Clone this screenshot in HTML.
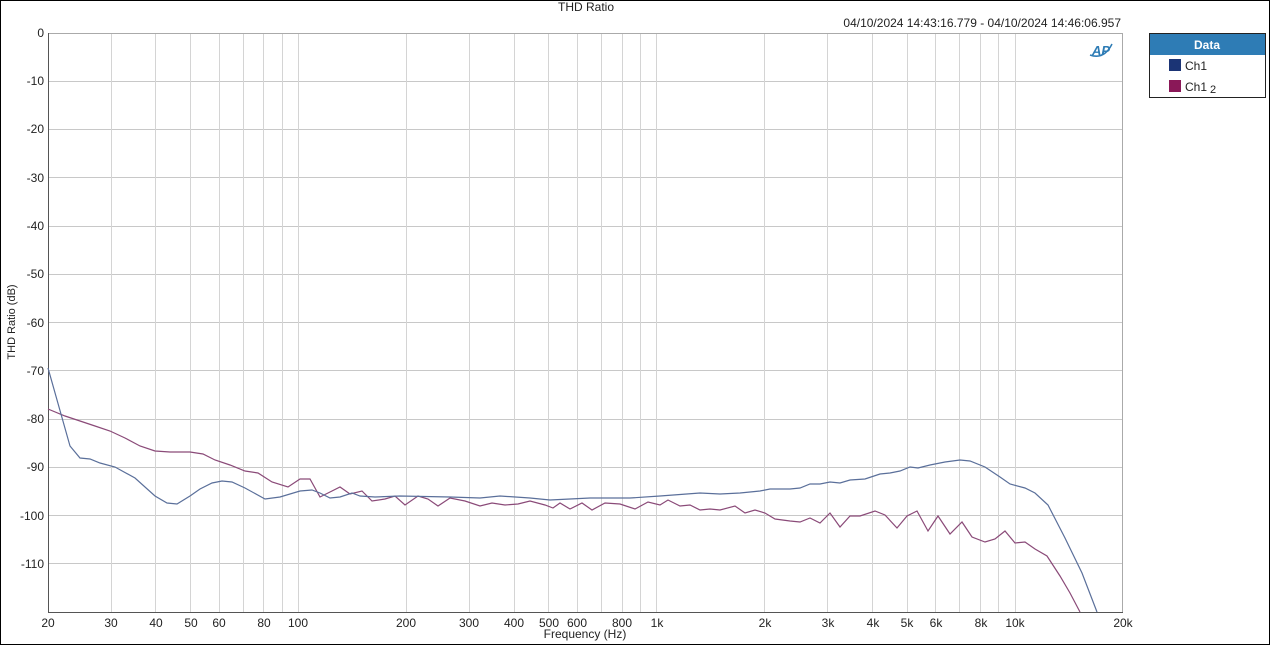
<!DOCTYPE html><html><head><style>body{margin:0;width:1270px;height:645px;overflow:hidden;background:#fff}text{font-family:"Liberation Sans",sans-serif;fill:#222}</style></head><body>
<svg width="1270" height="645" xmlns="http://www.w3.org/2000/svg">
<rect x="0.5" y="0.5" width="1269" height="644" fill="#fff" stroke="#000"/>
<text x="586" y="11" font-size="12" text-anchor="middle">THD Ratio</text>
<text x="1121" y="27" font-size="12" text-anchor="end">04/10/2024 14:43:16.779 - 04/10/2024 14:46:06.957</text>
<g id="grid" stroke="#d4d4d4" stroke-width="1">
<path d="M48.5 81.5H1123M48.5 129.5H1123M48.5 177.5H1123M48.5 226.5H1123M48.5 274.5H1123M48.5 322.5H1123M48.5 370.5H1123M48.5 419.5H1123M48.5 467.5H1123M48.5 515.5H1123M48.5 563.5H1123" stroke="#c8c8c8"/>
<path d="M111.5 33V612M155.5 33V612M190.5 33V612M219.5 33V612M243.5 33V612M263.5 33V612M282.5 33V612M298.5 33V612M406.5 33V612M469.5 33V612M514.5 33V612M548.5 33V612M577.5 33V612M601.5 33V612M622.5 33V612M640.5 33V612M656.5 33V612M764.5 33V612M827.5 33V612M872.5 33V612M907.5 33V612M935.5 33V612M959.5 33V612M980.5 33V612M998.5 33V612M1015.5 33V612"/>
</g>
<path d="M48.5 33.5H1122.5V612" fill="none" stroke="#aaa"/>
<path d="M48.5 33V612.5H1123" fill="none" stroke="#555"/>
<g font-size="12" text-anchor="end">
<text x="44" y="37">0</text><text x="44" y="85">-10</text><text x="44" y="133">-20</text><text x="44" y="182">-30</text><text x="44" y="230">-40</text><text x="44" y="278">-50</text><text x="44" y="327">-60</text><text x="44" y="375">-70</text><text x="44" y="423">-80</text><text x="44" y="471">-90</text><text x="44" y="520">-100</text><text x="44" y="568">-110</text>
</g>
<g font-size="12" text-anchor="middle">
<text x="48" y="627">20</text><text x="111" y="627">30</text><text x="156" y="627">40</text><text x="191" y="627">50</text><text x="219" y="627">60</text><text x="264" y="627">80</text><text x="298" y="627">100</text><text x="406" y="627">200</text><text x="469" y="627">300</text><text x="514" y="627">400</text><text x="549" y="627">500</text><text x="577" y="627">600</text><text x="622" y="627">800</text><text x="657" y="627">1k</text><text x="765" y="627">2k</text><text x="828" y="627">3k</text><text x="873" y="627">4k</text><text x="907" y="627">5k</text><text x="936" y="627">6k</text><text x="981" y="627">8k</text><text x="1015" y="627">10k</text><text x="1123" y="627">20k</text>
</g>
<text x="585" y="638" font-size="12" text-anchor="middle">Frequency (Hz)</text>
<text transform="translate(15,322) rotate(-90)" font-size="11" text-anchor="middle">THD Ratio (dB)</text>
<text x="1092" y="55" font-size="13" font-weight="bold" font-style="italic" style="fill:#2e7cb5">AP</text>
<path d="M1090 55 Q1104 60 1112 44" fill="none" stroke="#2e7cb5" stroke-width="1.5"/>
<polyline fill="none" stroke="#8a4a78" stroke-width="1.2" points="48,409 65,416 80,421 95,426 110,431 125,438 140,446 155,451 170,452 190,452 203,454 215,460 230,465 245,471 258,473 272,482 288,487 300,479 310,479 320,497 330,492 340,487 350,494 362,491 372,501 385,499 395,496 405,505 418,496 428,499 438,506 450,498 465,501 480,506 492,503 505,505 518,504 530,501 545,505 553,508 560,503 570,509 582,503 592,510 605,503 620,504 635,509 648,502 660,505 668,500 680,506 690,505 700,510 710,509 720,510 735,506 745,513 755,510 765,513 775,519 790,521 800,522 810,518 820,523 830,513 840,527 850,516 860,516 875,511 885,515 897,528 907,516 917,511 928,531 938,516 950,534 962,522 972,537 985,542 995,539 1005,531 1015,543 1025,542 1035,549 1047,556 1060,576 1070,593 1080,612"/>
<polyline fill="none" stroke="#5a6f9a" stroke-width="1.2" points="48,368 70,446 80,458 90,459 100,463 115,467 135,478 155,496 167,503 177,504 190,496 200,489 212,483 222,481 232,482 245,488 265,499 280,497 300,491 312,490 320,493 330,498 340,497 352,493 360,496 375,497 400,496 450,497 480,498 500,496 530,498 550,500 570,499 590,498 630,498 660,496 700,493 720,494 740,493 760,491 770,489 790,489 800,488 810,484 820,484 830,482 840,483 850,480 865,479 880,474 890,473 900,471 910,467 918,468 930,465 945,462 960,460 970,461 985,467 1000,477 1010,484 1025,488 1035,493 1048,505 1065,538 1082,573 1097,612"/>
<rect x="1149.5" y="33.5" width="116" height="64" fill="#fff" stroke="#222"/>
<rect x="1150" y="34" width="115" height="21" fill="#2e7cb5"/>
<text x="1207" y="49" font-size="12" font-weight="bold" text-anchor="middle" style="fill:#fff">Data</text>
<rect x="1169" y="59" width="12" height="12" fill="#1b3475"/>
<text x="1185" y="70" font-size="12">Ch1</text>
<rect x="1169" y="80" width="12" height="12" fill="#8a1858"/>
<text x="1185" y="91" font-size="12">Ch1</text><text x="1210" y="93" font-size="11">2</text>
</svg>
</body></html>
